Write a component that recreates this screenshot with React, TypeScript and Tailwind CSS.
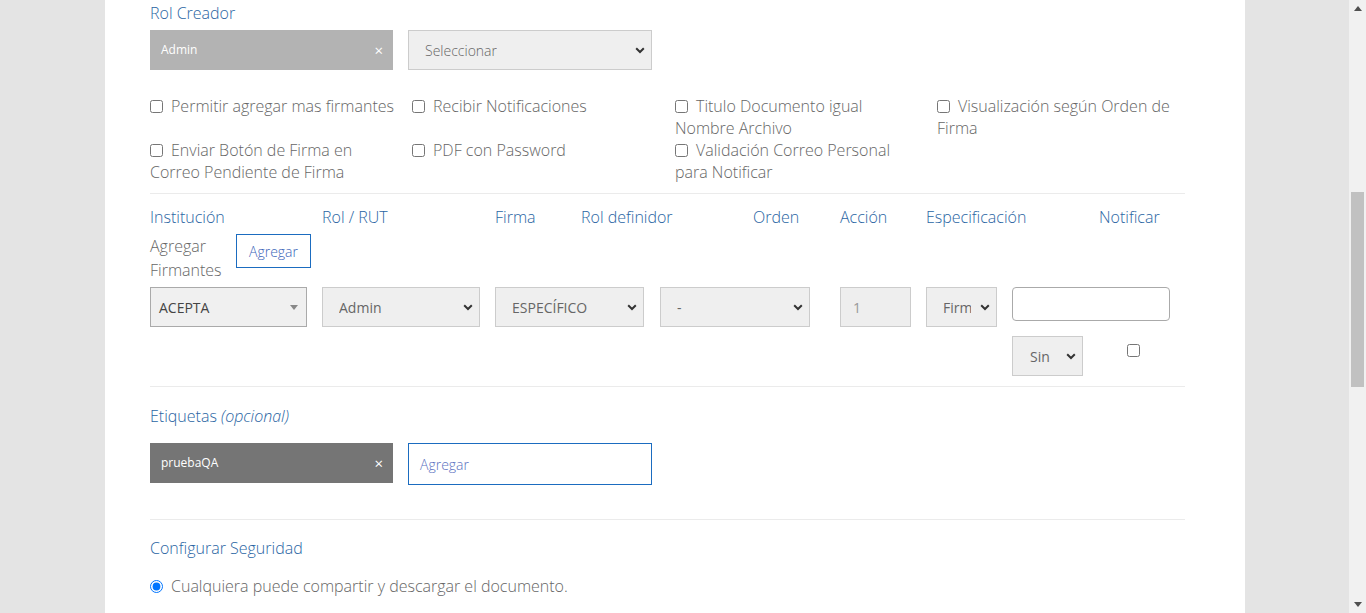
import React from "react"

function Chevron() {
    return (
        <svg width="10" height="7" viewBox="0 0 10 7" className="shrink-0">
            <path d="M1.2 1.3 L5 5 L8.8 1.3" fill="none" stroke="#333" strokeWidth="2" />
        </svg>
    )
}

function FakeSelect({ label, className, textClass }: { label: string; className: string; textClass?: string }) {
    return (
        <div className={"flex items-center justify-between border border-[#cccccc] bg-[#efefef] pr-[6px] text-[14px] " + className}>
            <span className={"overflow-hidden whitespace-nowrap text-[#666] " + (textClass || "")}>{label}</span>
            <Chevron />
        </div>
    )
}

function Tag({ label, bg }: { label: string; bg: string }) {
    return (
        <div className={"flex h-[40px] w-[243px] items-center justify-between pl-[11px] pr-[10px] text-[12px] font-normal text-white " + bg}>
            <span>{label}</span>
            <span className="text-[15px] leading-none">×</span>
        </div>
    )
}

function Check({ children }: { children: React.ReactNode }) {
    return (
        <div className="pr-[15px] leading-[22px]">
            <input type="checkbox" className="relative top-[1px] m-0 mr-[8px] h-[13px] w-[13px] align-baseline" />
            {children}
        </div>
    )
}

export default function App() {
    return (
        <div className="flex h-[613px] w-[1366px] overflow-hidden bg-[#e4e4e4] font-['Open_Sans',sans-serif] text-[16px] font-light text-[#666666]">

            <div className="w-[105px] shrink-0" />

            <div className="w-[1140px] shrink-0 bg-white pl-[45px] pr-[60px] pt-[2px]">

                <div className="leading-[22px] text-[#2a65a3]">Rol Creador</div>

                <div className="mt-[6px] flex h-[40px] gap-[15px]">
                    <Tag label="Admin" bg="bg-[#b3b3b3]" />
                    <FakeSelect label="Seleccionar" className="h-[40px] w-[244px] pl-[16px]" textClass="text-[#555]" />
                </div>

                <div className="mt-[25px] grid grid-cols-[262px_263px_262px_1fr]">
                    <Check>Permitir agregar mas firmantes</Check>
                    <Check>Recibir Notificaciones</Check>
                    <Check>Titulo Documento igual Nombre Archivo</Check>
                    <Check>Visualización según Orden de Firma</Check>
                    <Check>Enviar Botón de Firma en Correo Pendiente de Firma</Check>
                    <Check>PDF con Password</Check>
                    <Check>Validación Correo Personal para Notificar</Check>
                    <div />
                </div>

                <div className="mt-[10px] border-t border-[#ebebeb]" />

                <div className="mt-[12px] flex leading-[22px] text-[#2a65a3]">
                    <div className="w-[172px]">Institución</div>
                    <div className="w-[173px]">Rol / RUT</div>
                    <div className="w-[86px]">Firma</div>
                    <div className="w-[172px]">Rol definidor</div>
                    <div className="w-[87px]">Orden</div>
                    <div className="w-[86px]">Acción</div>
                    <div className="w-[173px]">Especificación</div>
                    <div>Notificar</div>
                </div>

                <div className="mt-[6px] flex items-start">
                    <div className="w-[86px] leading-[24px]">Agregar Firmantes</div>
                    <button className="h-[34px] w-[75px] border border-[#1b6cc0] bg-white text-[14px] text-[#3a63b8]">
                        Agregar
                    </button>
                </div>

                <div className="mt-[5px] flex items-start font-normal">
                    <div className="flex h-[40px] w-[157px] items-center justify-between border border-[#aaaaaa] bg-[#f0f0f0] pl-[8px] pr-[8px] text-[14px] text-[#444]">
                        <span>ACEPTA</span>
                        <svg width="8" height="5" viewBox="0 0 8 5"><path d="M0 0 L8 0 L4 5 Z" fill="#888" /></svg>
                    </div>
                    <FakeSelect label="Admin" className="ml-[15px] h-[40px] w-[158px] pl-[16px]" />
                    <FakeSelect label="ESPECÍFICO" className="ml-[15px] h-[40px] w-[149px] pl-[16px]" />
                    <FakeSelect label="-" className="ml-[16px] h-[40px] w-[150px] pl-[16px]" />
                    <div className="ml-[30px] flex h-[40px] w-[71px] items-center border border-[#cccccc] bg-[#eeeeee] pl-[12px] text-[14px] text-[#999]">1</div>
                    <FakeSelect label="Firm" className="ml-[15px] h-[40px] w-[71px] pl-[16px]" textClass="w-[28px]" />
                    <div className="ml-[15px] flex flex-col">
                        <div className="h-[34px] w-[158px] rounded-[4px] border border-[#aaaaaa] bg-white" />
                        <div className="mt-[15px] flex items-start">
                            <FakeSelect label="Sin" className="h-[40px] w-[71px] pl-[17px]" />
                            <input type="checkbox" className="m-0 ml-[44px] mt-[8px] h-[13px] w-[13px]" />
                        </div>
                    </div>
                </div>

                <div className="mt-[10px] border-t border-[#ebebeb]" />

                <div className="mt-[18px] leading-[22px] text-[#2a65a3]">
                    Etiquetas <span className="italic">(opcional)</span>
                </div>

                <div className="mt-[16px] flex items-start gap-[15px]">
                    <Tag label="pruebaQA" bg="bg-[#757575]" />
                    <div className="flex h-[42px] w-[244px] items-center border border-[#1b6cc0] bg-white pl-[11px] text-[14px] text-[#5a6fc0]">
                        Agregar
                    </div>
                </div>

                <div className="mt-[34px] border-t border-[#ebebeb]" />

                <div className="mt-[17px] leading-[22px] text-[#2a65a3]">Configurar Seguridad</div>

                <div className="mt-[16px] flex items-center leading-[22px]">
                    <input type="radio" defaultChecked className="m-0 mr-[8px] h-[13px] w-[13px]" />
                    <span>Cualquiera puede compartir y descargar el documento.</span>
                </div>

            </div>

            <div className="flex-1" />

            <div className="flex w-[17px] shrink-0 flex-col bg-[#f1f1f1]">
                <div className="flex h-[17px] items-center justify-center">
                    <svg width="8" height="5" viewBox="0 0 8 5"><path d="M0 5 L8 5 L4 0 Z" fill="#505050" /></svg>
                </div>
                <div className="flex-1">
                    <div className="mx-[2px] mt-[175px] h-[195px] bg-[#c1c1c1]" />
                </div>
                <div className="flex h-[17px] items-center justify-center">
                    <svg width="8" height="5" viewBox="0 0 8 5"><path d="M0 0 L8 0 L4 5 Z" fill="#505050" /></svg>
                </div>
            </div>

        </div>
    )
}
